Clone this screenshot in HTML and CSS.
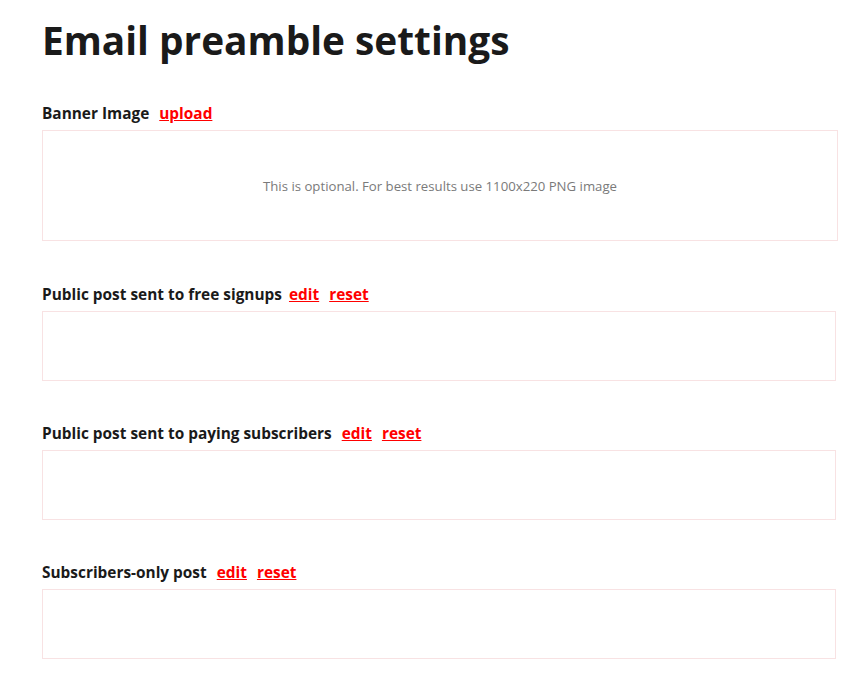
FILE: index.html
```html
<!DOCTYPE html>
<html lang="en">
<head>
<meta charset="utf-8">
<title>Email preamble settings</title>
<link rel="stylesheet" href="styles.css">
</head>
<body>
<main class="page">
  <h1 class="title">Email preamble settings</h1>

  <section class="section section-banner">
    <div class="label-row">
      <span class="label">Banner Image</span>
      <a class="action action-wide" href="#">upload</a>
    </div>
    <div class="box box-banner">
      <span class="hint">This is optional. For best results use 1100x220 PNG image</span>
    </div>
  </section>

  <section class="section">
    <div class="label-row">
      <span class="label">Public post sent to free signups</span>
      <a class="action action-tight" href="#">edit</a>
      <a class="action action-wide" href="#">reset</a>
    </div>
    <div class="box"></div>
  </section>

  <section class="section">
    <div class="label-row">
      <span class="label">Public post sent to paying subscribers</span>
      <a class="action action-wide" href="#">edit</a>
      <a class="action action-wide" href="#">reset</a>
    </div>
    <div class="box"></div>
  </section>

  <section class="section">
    <div class="label-row">
      <span class="label">Subscribers-only post</span>
      <a class="action action-wide" href="#">edit</a>
      <a class="action action-wide" href="#">reset</a>
    </div>
    <div class="box"></div>
  </section>
</main>
</body>
</html>
```

FILE: styles.css
```css
html, body {
  margin: 0;
  padding: 0;
  background: #ffffff;
}

body {
  font-family: "Open Sans", "Noto Sans", "Liberation Sans", sans-serif;
  color: #1a1a1a;
}

.page {
  padding: 0 21px 0 42px;
}

.title {
  margin: 0;
  padding-top: 12px;
  font-size: 38.8px;
  line-height: 56px;
  font-weight: 700;
  color: #1a1a1a;
}

.section {
  display: flex;
  flex-direction: column;
}

.section-banner {
  margin-top: 36px;
}

.section + .section {
  margin-top: 43px;
}

.section-banner + .section {
  margin-top: 44px;
}

.label-row {
  display: flex;
  align-items: baseline;
  height: 20px;
  margin-bottom: 6px;
  font-size: 15.4px;
  line-height: 20px;
  font-weight: 700;
}

.label {
  color: #1a1a1a;
}

.action {
  color: #ff0000;
  text-decoration: underline;
  font-weight: 700;
}

.action-tight {
  margin-left: 7px;
}

.action-wide {
  margin-left: 10px;
}

.box {
  box-sizing: border-box;
  height: 70px;
  margin-right: 2px;
  border: 1px solid #f8e2e3;
}

.box-banner {
  height: 111px;
  margin-right: 0;
  display: flex;
  align-items: center;
  justify-content: center;
}

.hint {
  font-size: 13.2px;
  font-weight: 400;
  color: #7a7a7a;
}
```
